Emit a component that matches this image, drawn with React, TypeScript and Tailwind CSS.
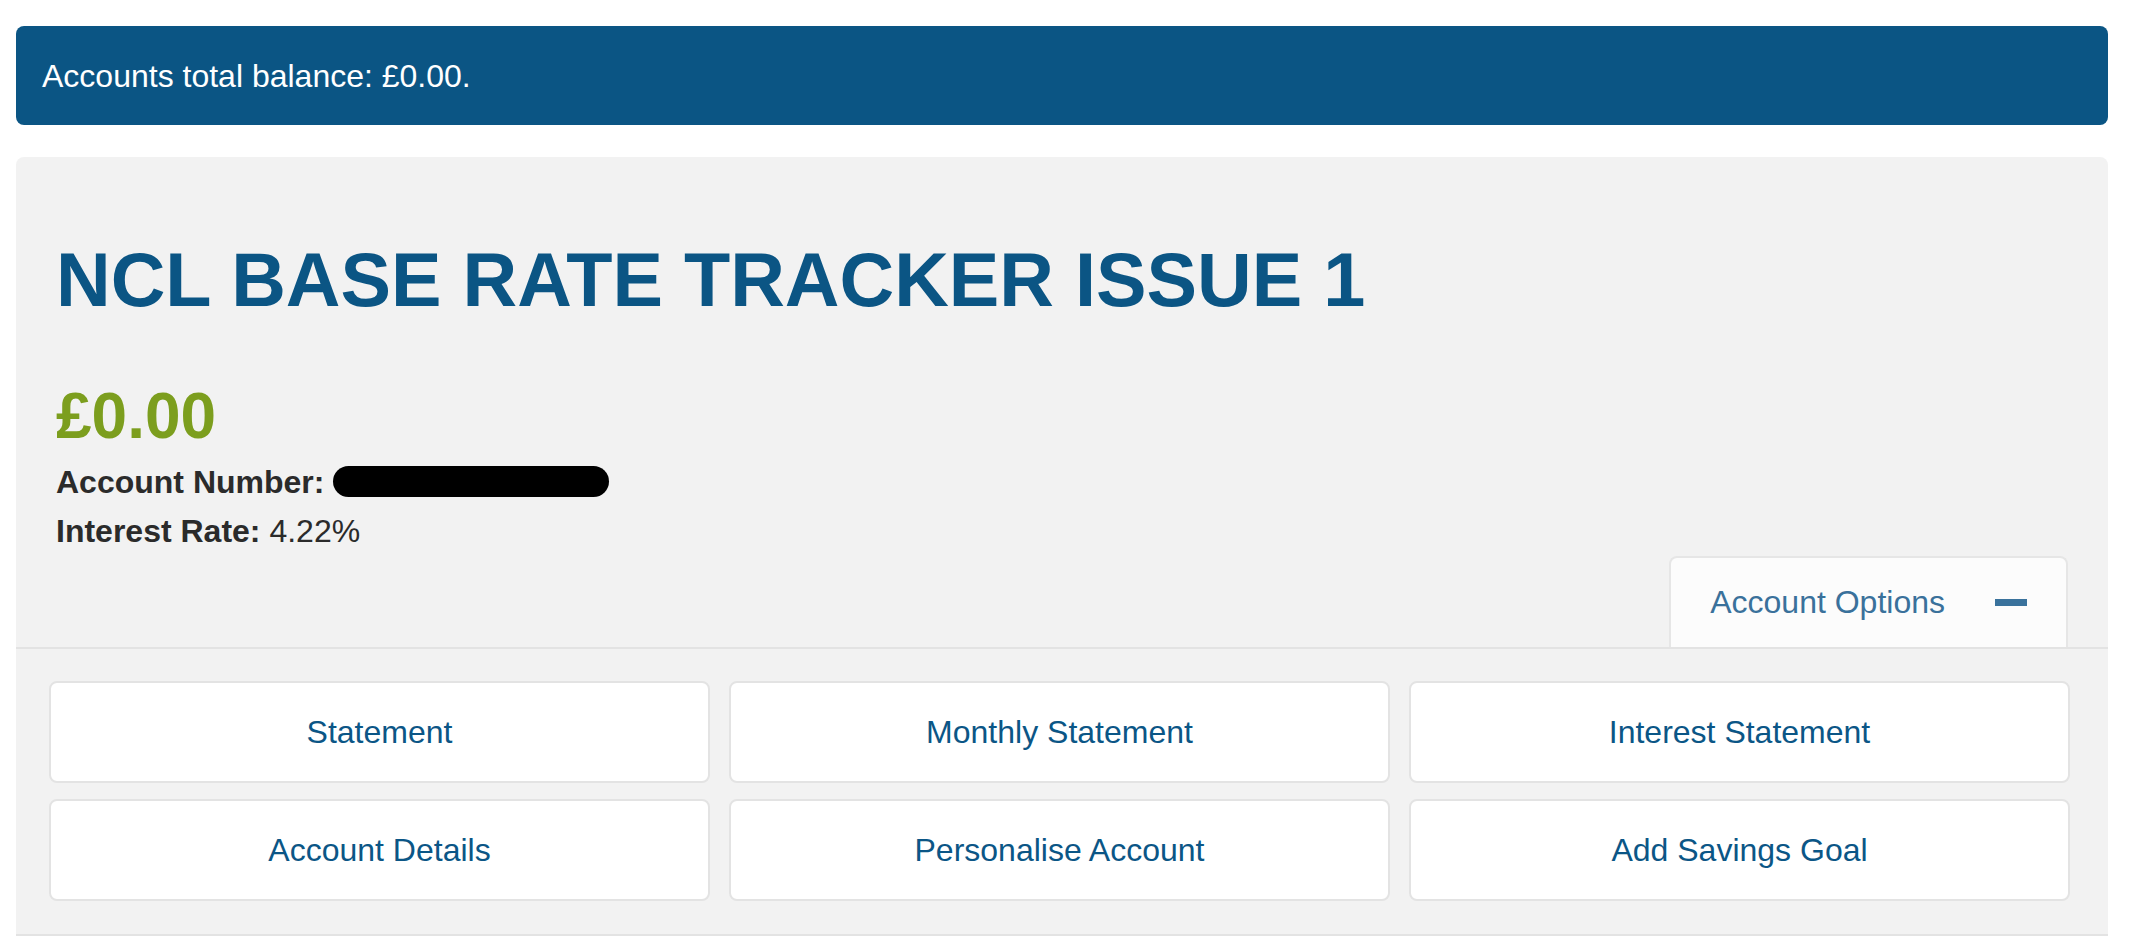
const options = [
  'Statement',
  'Monthly Statement',
  'Interest Statement',
  'Account Details',
  'Personalise Account',
  'Add Savings Goal',
];

export default function App() {
  return (
    <main className="min-h-screen bg-white pl-4 pr-6 pt-[26px] font-['Liberation_Sans',Arial,sans-serif]">
      <div className="flex h-[99px] items-center rounded-lg bg-[#0b5584] px-[26px] text-[32px] text-white">
        Accounts total balance: £0.00.
      </div>

      <section className="mt-8 rounded-t-lg border-b-2 border-[#e3e3e3] bg-[#f2f2f2]">
        <div className="px-10 pt-[78px]">
          <h1 className="text-[75.7px] font-bold leading-[1.2] text-[#0b5584]">
            NCL BASE RATE TRACKER ISSUE 1
          </h1>
          <div className="mt-[52px] text-[64px] font-bold leading-[1.2] text-[#7c9e1e]">£0.00</div>
          <p className="mt-[3px] text-[32px] leading-[48px] text-[#2b2b2b]">
            <span className="font-bold">Account Number:</span>{' '}
            <span className="inline-block h-[31px] w-[276px] rounded-full bg-black align-[-4px]" />
          </p>
          <p className="mt-[1px] text-[32px] leading-[48px] text-[#2b2b2b]">
            <span className="font-bold">Interest Rate:</span> 4.22%
          </p>
          <div className="mt-[1px] flex justify-end">
            <button className="flex h-[91px] items-center gap-[50px] rounded-t-lg border-2 border-b-0 border-[#e6e6e6] bg-[#fcfcfc] px-[39px] text-[32px] text-[#3a719b]">
              Account Options
              <span className="block h-[7px] w-8 bg-[#3a729c]" />
            </button>
          </div>
        </div>

        <div className="grid grid-cols-3 gap-x-[19px] gap-y-4 border-t-2 border-[#e3e3e3] pb-[33px] pl-[33px] pr-[38px] pt-[32px]">
          {options.map(label => (
            <button
              key={label}
              className="flex h-[102px] items-center justify-center rounded-lg border-2 border-[#e3e3e3] bg-white text-[32px] text-[#0b5686]"
            >
              {label}
            </button>
          ))}
        </div>
      </section>
    </main>
  );
}
